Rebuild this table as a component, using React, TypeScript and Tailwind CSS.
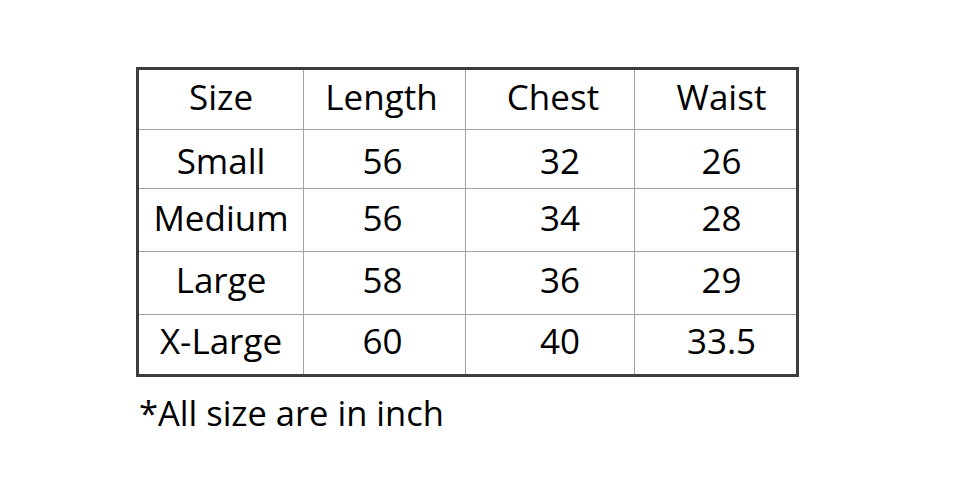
const header = ["Size", "Length", "Chest", "Waist"];

const rows = [
  ["Small", "56", "32", "26"],
  ["Medium", "56", "34", "28"],
  ["Large", "58", "36", "29"],
  ["X-Large", "60", "40", "33.5"],
];

const colWidths = ["w-[165px]", "w-[162px]", "w-[169px]", "w-[161px]"];
const rowHeights = ["h-[60px]", "h-[59px]", "h-[63px]", "h-[63px]", "h-[59px]"];
// nudge each row's text up a little, as in the picture
const rowNudge = ["pb-[7px]", "pt-[2px]", "pb-[5px]", "pb-[7px]", "pb-[8px]"];
// the numbers sit a bit right of centre in the last two columns
const headPad = ["pl-0", "pr-[6px]", "pl-[6px]", "pl-[12px]"];
const bodyPad = ["pl-0", "pr-[4px]", "pl-[20px]", "pl-[12px]"];

export default function App() {
  const all = [header, ...rows];
  return (
    <div
      className="w-[960px] h-[478px] bg-white text-black pt-[67px] pl-[136px]"
      style={{ fontFamily: '"Open Sans", "Noto Sans", sans-serif' }}
    >
      <div className="inline-flex flex-col border-[3px] border-[#3d3d3d]">
        {all.map((row, r) => (
          <div
            key={r}
            className={`flex ${rowHeights[r]} ${r < all.length - 1 ? "border-b border-[#a3a3a3]" : ""}`}
          >
            {row.map((cell, c) => (
              <div
                key={c}
                className={`${colWidths[c]} ${rowNudge[r]} ${r === 0 ? headPad[c] : bodyPad[c]} flex items-center justify-center text-[35px] leading-none ${
                  c < row.length - 1 ? "border-r border-[#a3a3a3]" : ""
                }`}
              >
                {cell}
              </div>
            ))}
          </div>
        ))}
      </div>
      <p className="mt-[19px] ml-[3px] text-[34.5px] leading-none">*All size are in inch</p>
    </div>
  );
}
